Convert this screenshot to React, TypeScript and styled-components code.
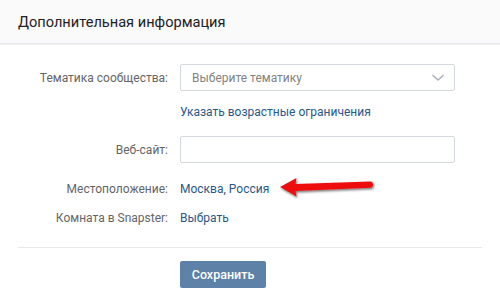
import React from "react";
import styled, { createGlobalStyle } from "styled-components";

const Global = createGlobalStyle`
  html, body { margin: 0; padding: 0; background: #fff; }
  body { font-family: Roboto, "Open Sans", "Liberation Sans", sans-serif; -webkit-font-smoothing: antialiased; }
  * { box-sizing: border-box; }
`;

const Page = styled.div`
  width: 500px;
  height: 306px;
  background: #fff;
  overflow: hidden;
`;

const Header = styled.div`
  height: 44px;
  background: #fafafa;
  border-bottom: 1px solid #e7e8ec;
  box-shadow: 0 1px 0 #f3f3f5;
  display: flex;
  align-items: center;
  padding-left: 18px;
  font-size: 14.6px;
  color: #222;
`;

const Form = styled.div`
  padding: 20px 0 0 0;
  display: flex;
  flex-direction: column;
`;

const Row = styled.div<{ $mt?: number }>`
  position: relative;
  display: grid;
  grid-template-columns: 168px 275px;
  column-gap: 12px;
  align-items: center;
  margin-top: ${(p) => p.$mt ?? 0}px;
`;

const Label = styled.div`
  text-align: right;
  font-size: 12px;
  color: #656565;
  line-height: 16px;
`;

const Select = styled.div`
  height: 27px;
  border: 1px solid #d3d9de;
  border-radius: 2px;
  display: flex;
  align-items: center;
  justify-content: space-between;
  padding: 0 10px 0 11px;
  font-size: 12px;
  color: #828282;
`;

const Input = styled.div`
  height: 27px;
  border: 1px solid #d3d9de;
  border-radius: 2px;
  background: #fff;
`;

const Link = styled.a`
  font-size: 12px;
  line-height: 16px;
  color: #2a5885;
  text-decoration: none;
`;

const Value = styled.span`
  font-size: 12px;
  line-height: 16px;
  color: #2a5885;
`;

const Divider = styled.div`
  margin: 21px 18px 0 18px;
  height: 1px;
  background: #e7e8ec;
`;

const Footer = styled.div`
  padding: 13px 0 0 180px;
`;

const Button = styled.button`
  width: 86px;
  height: 27px;
  border: none;
  border-radius: 2px;
  background: #5e81a8;
  color: #fff;
  font-family: Roboto, "Open Sans", "Liberation Sans", sans-serif;
  font-size: 12.5px;
  font-weight: 500;
  padding: 0;
  cursor: pointer;
`;

const ArrowWrap = styled.svg`
  position: absolute;
  left: 276px;
  top: -10px;
  overflow: visible;
`;

const Chevron = () => (
  <svg width="12" height="8" viewBox="0 0 12 8">
    <path d="M1 1.5 L6 6 L11 1.5" fill="none" stroke="#a6afba" strokeWidth="1.5" strokeLinecap="round" strokeLinejoin="round" />
  </svg>
);

const Arrow = () => (
  <ArrowWrap width="100" height="30" viewBox="0 0 100 30">
    <defs>
      <filter id="sh" x="-20%" y="-50%" width="140%" height="200%">
        <feDropShadow dx="1" dy="1.5" stdDeviation="1" floodColor="#000" floodOpacity="0.55" />
      </filter>
    </defs>
    <g filter="url(#sh)">
      <path
        d="M4 16 L20.5 7 L19.5 13 L94 10.5 Q97 10.5 97 13.5 Q97 16.5 94 16.7 L19.5 20 L20.5 25.5 Z"
        fill="#ee1111"
      />
    </g>
  </ArrowWrap>
);

export default function App() {
  return (
    <Page>
      <Global />
      <Header>Дополнительная информация</Header>
      <Form>
        <Row>
          <Label>Тематика сообщества:</Label>
          <Select>
            <span>Выберите тематику</span>
            <Chevron />
          </Select>
        </Row>
        <Row $mt={13}>
          <span />
          <Link href="#">Указать возрастные ограничения</Link>
        </Row>
        <Row $mt={16}>
          <Label>Веб-сайт:</Label>
          <Input />
        </Row>
        <Row $mt={18}>
          <Label>Местоположение:</Label>
          <Value>Москва, Россия</Value>
          <Arrow />
        </Row>
        <Row $mt={13}>
          <Label>Комната в Snapster:</Label>
          <Link href="#">Выбрать</Link>
        </Row>
      </Form>
      <Divider />
      <Footer>
        <Button>Сохранить</Button>
      </Footer>
    </Page>
  );
}
